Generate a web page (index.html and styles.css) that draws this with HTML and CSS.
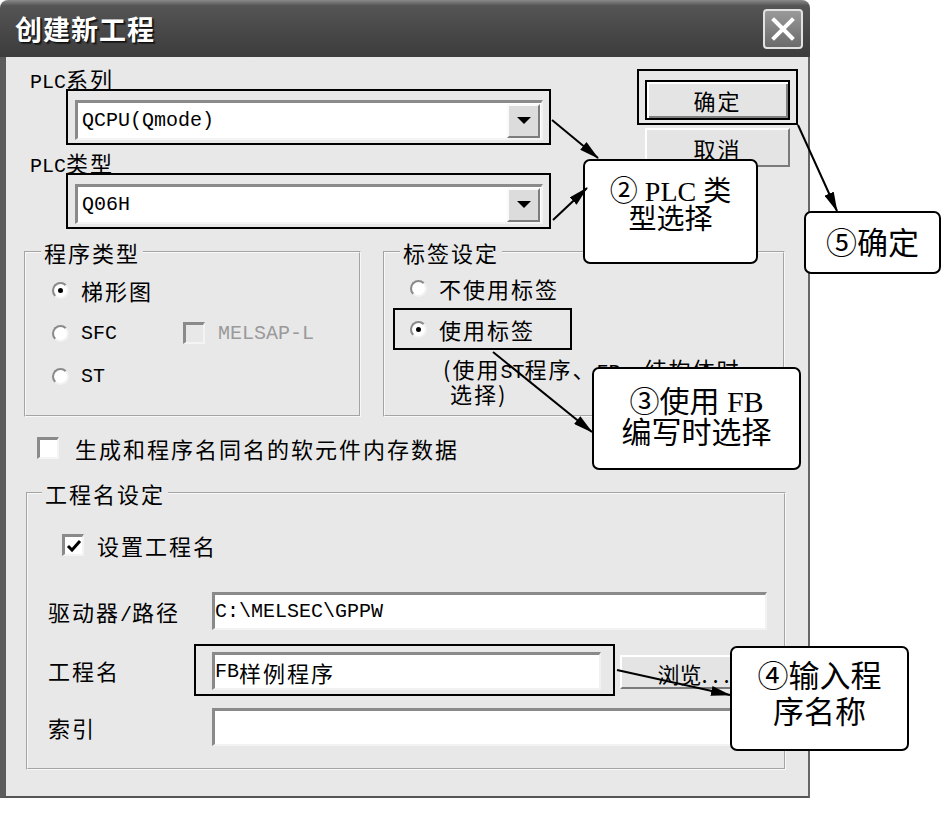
FILE: index.html
```html
<!DOCTYPE html>
<html lang="zh-CN">
<head>
    <meta charset="UTF-8">
    <title>创建新工程</title>
    <link rel="stylesheet" href="styles.css">
</head>
<body>
<div class="page">
    <div class="window">
        <div class="titlebar">
            <h1 class="title">创建新工程</h1>
            <button class="close-btn" aria-label="关闭">
                <svg width="24" height="24" viewBox="0 0 24 24"><path d="M3 3 L21 21 M21 3 L3 21" stroke="#fff" stroke-width="4" stroke-linecap="square"/></svg>
            </button>
        </div>

        <div class="window-body">
            <!-- PLC series / type + OK / Cancel -->
            <div class="top-row">
                <div class="plc-fields">
                    <div class="field-label"><span class="mono">PLC</span>系列</div>
                    <div class="mark mark-combo">
                        <div class="combo"><span class="mono">QCPU(Qmode)</span><span class="combo-arrow"></span></div>
                    </div>
                    <div class="field-label second"><span class="mono">PLC</span>类型</div>
                    <div class="mark mark-combo">
                        <div class="combo"><span class="mono">Q06H</span><span class="combo-arrow"></span></div>
                    </div>
                </div>
                <div class="dialog-buttons">
                    <div class="mark mark-ok"><button class="btn btn-default">确定</button></div>
                    <button class="btn btn-cancel">取消</button>
                </div>
            </div>

            <!-- program type / label setting -->
            <div class="group-row">
                <fieldset class="group group-type">
                    <legend>程序类型</legend>
                    <div class="option-list">
                        <div class="option"><span class="radio checked"></span>梯形图</div>
                        <div class="option"><span class="radio"></span><span class="mono opt-sfc">SFC</span><span class="check disabled"></span><span class="mono disabled-text">MELSAP-L</span></div>
                        <div class="option"><span class="radio"></span><span class="mono">ST</span></div>
                    </div>
                </fieldset>
                <fieldset class="group group-label">
                    <legend>标签设定</legend>
                    <div class="option-list tight">
                        <div class="option"><span class="radio"></span>不使用标签</div>
                        <div class="mark mark-label">
                            <div class="option"><span class="radio checked"></span>使用标签</div>
                        </div>
                        <div class="note">
                            <div>(使用<span class="mono">ST</span>程序、<span class="mono">FB</span>、结构体时</div>
                            <div class="note-second">选择)</div>
                        </div>
                    </div>
                </fieldset>
            </div>

            <div class="check-row outer"><span class="check"></span>生成和程序名同名的软元件内存数据</div>

            <!-- project name setting -->
            <fieldset class="group group-project">
                <legend>工程名设定</legend>
                <div class="check-row inner">
                    <span class="check checked">
                        <svg width="16" height="16" viewBox="0 0 16 16"><path d="M2 8 L6 12 L14 3" fill="none" stroke="#000" stroke-width="3"/></svg>
                    </span>设置工程名
                </div>
                <div class="form-row first">
                    <label class="form-label">驱动器<span class="mono">/</span>路径</label>
                    <div class="textbox wide"><span class="mono">C:\MELSEC\GPPW</span></div>
                </div>
                <div class="form-row name-row">
                    <label class="form-label short">工程名</label>
                    <div class="mark mark-name">
                        <div class="textbox name"><span class="mono">FB</span>样例程序</div>
                    </div>
                    <button class="btn btn-browse">浏览. . .</button>
                </div>
                <div class="form-row last">
                    <label class="form-label">索引</label>
                    <div class="textbox wide"></div>
                </div>
            </fieldset>
        </div>
    </div>

    <!-- annotation callouts -->
    <div class="callout callout-type">② PLC 类<br>型选择</div>
    <div class="callout callout-ok">⑤确定</div>
    <div class="callout callout-fb">③使用 FB<br>编写时选择</div>
    <div class="callout callout-name">④输入程<br>序名称</div>

    <svg class="arrows" width="941" height="815" viewBox="0 0 941 815">
        <defs>
            <marker id="head" viewBox="0 0 20 10" markerWidth="20" markerHeight="10" markerUnits="userSpaceOnUse" refX="19" refY="5" orient="auto">
                <path d="M0 0 L20 5 L0 10 Z" fill="#000"/>
            </marker>
        </defs>
        <g stroke="#000" stroke-width="2" marker-end="url(#head)">
            <line x1="552" y1="120" x2="598" y2="158"/>
            <line x1="553" y1="220" x2="587" y2="188"/>
            <line x1="798" y1="125" x2="837" y2="211"/>
            <line x1="493" y1="352" x2="592" y2="432"/>
            <line x1="617" y1="670" x2="730" y2="695"/>
        </g>
    </svg>
</div>
</body>
</html>
```

FILE: styles.css
```css
/* Global */
* {
    margin: 0;
    padding: 0;
    box-sizing: border-box;
}

body {
    background: #fff;
    color: #000;
    font-family: "Noto Sans CJK SC", sans-serif;
    font-size: 22px;
    letter-spacing: 2px;
    width: 941px;
    height: 815px;
    overflow: hidden;
}

.page {
    position: relative;
    width: 941px;
    height: 815px;
}

.mono {
    font-family: "Liberation Mono", monospace;
    font-size: 20px;
    letter-spacing: 0;
}

/* Window frame */
.window {
    width: 810px;
}

.titlebar {
    height: 57px;
    display: flex;
    align-items: center;
    justify-content: space-between;
    padding: 0 7px 0 15px;
    border-radius: 8px 8px 0 0;
    background: linear-gradient(#8a8a8a 0, #555 10%, #484848 55%, #3c3c3c 100%);
}

.title {
    color: #fff;
    font-size: 27px;
    font-weight: 700;
    letter-spacing: 1px;
    text-shadow: 1px 1px 0 #111, 2px 2px 1px #222;
}

.close-btn {
    width: 40px;
    height: 40px;
    display: flex;
    align-items: center;
    justify-content: center;
    border: 2px solid #e2e2e2;
    border-radius: 4px;
    background: linear-gradient(#9a9a9a, #6a6a6a);
}

.window-body {
    height: 741px;
    background: #e8e8e8;
    border-left: 6px solid #5c5c5c;
    border-right: 2px solid #666;
    border-bottom: 2px solid #555;
    padding-top: 11px;
}

/* Annotation frames */
.mark {
    border: 2px solid #000;
}

/* Top area */
.top-row {
    display: flex;
}

.plc-fields {
    width: 545px;
}

.field-label {
    margin-left: 24px;
    height: 21px;
    line-height: 21px;
}

.field-label.second {
    margin-top: 7px;
}

.mark-combo {
    margin-left: 60px;
    width: 485px;
    height: 56px;
    padding: 9px 0 0 7px;
}

.combo {
    width: 468px;
    height: 40px;
    display: flex;
    align-items: center;
    justify-content: space-between;
    padding: 0 1px 0 4px;
    background: #fff;
    border-style: solid;
    border-width: 3px 2px 2px 3px;
    border-color: #8a8a8a #f4f4f4 #f4f4f4 #8a8a8a;
}

.combo-arrow {
    width: 33px;
    height: 34px;
    display: flex;
    align-items: center;
    justify-content: center;
    background: #dcdcdc;
    border: 2px solid;
    border-color: #fafafa #7c7c7c #7c7c7c #fafafa;
}

.combo-arrow::after {
    content: "";
    border-left: 7px solid transparent;
    border-right: 7px solid transparent;
    border-top: 7px solid #000;
}

.dialog-buttons {
    margin-left: 86px;
}

.btn {
    font-family: "Noto Sans CJK SC", sans-serif;
    font-size: 22px;
    letter-spacing: 2px;
    color: #000;
    background: #e4e4e4;
    border: 2px solid;
    border-color: #fff #7a7a7a #7a7a7a #fff;
}

.mark-ok {
    margin-top: 1px;
    width: 161px;
    height: 56px;
    padding: 9px 0 0 6px;
}

.btn-default {
    width: 145px;
    height: 40px;
    border: 2px solid #000;
    box-shadow: inset 2px 2px 0 #fff, inset -2px -2px 0 #808080;
}

.btn-cancel {
    display: block;
    margin: 3px 0 0 8px;
    width: 145px;
    height: 39px;
}

/* Group boxes */
fieldset {
    min-width: 0;
}

.group {
    border: 2px groove #f8f8f8;
}

.group legend {
    margin-left: 15px;
    padding: 0 3px;
    line-height: 24px;
}

.group-row {
    display: flex;
    gap: 22px;
    margin-top: 11px;
    padding-left: 18px;
}

.group-type {
    width: 337px;
    height: 177px;
}

.group-label {
    width: 402px;
    height: 177px;
}

.option-list {
    display: flex;
    flex-direction: column;
    gap: 19px;
    padding: 14px 0 0 26px;
}

.option-list.tight {
    gap: 0;
    padding: 12px 0 0 25px;
}

.option {
    display: flex;
    align-items: center;
    height: 24px;
}

.radio {
    width: 17px;
    height: 17px;
    flex: none;
    margin-right: 12px;
    display: flex;
    align-items: center;
    justify-content: center;
    border-radius: 50%;
    background: #fff;
    border: 2px solid;
    border-color: #8a8a8a #f2f2f2 #f2f2f2 #8a8a8a;
}

.radio.checked::after {
    content: "";
    width: 5px;
    height: 5px;
    border-radius: 50%;
    background: #000;
}

.opt-sfc {
    width: 102px;
}

.check {
    width: 22px;
    height: 22px;
    flex: none;
    display: flex;
    align-items: center;
    justify-content: center;
    background: #fff;
    border-style: solid;
    border-width: 3px 2px 2px 3px;
    border-color: #8a8a8a #f4f4f4 #f4f4f4 #8a8a8a;
}

.check.disabled {
    background: #e8e8e8;
    margin-right: 13px;
}

.disabled-text {
    color: #9a9a9a;
}

.mark-label {
    margin: 8px 0 0 -17px;
    width: 179px;
    height: 42px;
    padding-left: 15px;
    display: flex;
    align-items: center;
}

.note {
    margin: 8px 0 0 33px;
    line-height: 20px;
    white-space: nowrap;
}

.note-second {
    padding-left: 7px;
}

/* Checkbox rows */
.check-row {
    display: flex;
    align-items: center;
    height: 22px;
}

.check-row .check {
    margin-right: 16px;
}

.check-row.outer {
    margin-top: 20px;
    padding-left: 31px;
}

.check-row.inner {
    margin-top: 29px;
    padding-left: 34px;
}

.check-row.inner .check {
    margin-right: 13px;
}

/* Project name group */
.group-project {
    margin: 22px 0 0 20px;
    width: 760px;
    height: 289px;
}

.group-project legend {
    margin-left: 14px;
}

.form-row {
    display: flex;
    align-items: center;
    padding-left: 20px;
}

.form-row.first {
    margin-top: 36px;
}

.name-row {
    margin-top: 14px;
    align-items: flex-start;
}

.form-row.last {
    margin-top: 12px;
}

.form-label {
    width: 164px;
    flex: none;
}

.form-label.short {
    width: 146px;
    align-self: center;
}

.textbox {
    height: 38px;
    display: flex;
    align-items: center;
    background: #fff;
    border-style: solid;
    border-width: 3px 2px 2px 3px;
    border-color: #8a8a8a #f2f2f2 #f2f2f2 #8a8a8a;
}

.textbox.wide {
    width: 555px;
}

.mark-name {
    width: 421px;
    height: 52px;
    padding: 6px 0 0 16px;
}

.textbox.name {
    width: 389px;
}

.btn-browse {
    margin: 11px 0 0 5px;
    width: 147px;
    height: 34px;
    letter-spacing: 0;
}

/* Callouts */
.callout {
    position: absolute;
    background: #fff;
    border: 2px solid #000;
    border-radius: 7px;
    text-align: center;
    font-family: "Liberation Serif", "Noto Sans CJK SC", serif;
    letter-spacing: 0;
    color: #000;
}

.callout-type {
    left: 583px;
    top: 159px;
    width: 175px;
    height: 105px;
    padding-top: 17px;
    font-size: 28px;
    line-height: 28px;
}

.callout-ok {
    left: 804px;
    top: 211px;
    width: 137px;
    height: 63px;
    padding-top: 15px;
    font-size: 31px;
    line-height: 31px;
}

.callout-fb {
    left: 592px;
    top: 367px;
    width: 209px;
    height: 103px;
    padding-top: 17px;
    font-size: 30px;
    line-height: 31px;
}

.callout-name {
    left: 730px;
    top: 646px;
    width: 179px;
    height: 105px;
    padding-top: 11px;
    font-size: 31px;
    line-height: 36px;
}

.arrows {
    position: absolute;
    left: 0;
    top: 0;
    pointer-events: none;
}
```
